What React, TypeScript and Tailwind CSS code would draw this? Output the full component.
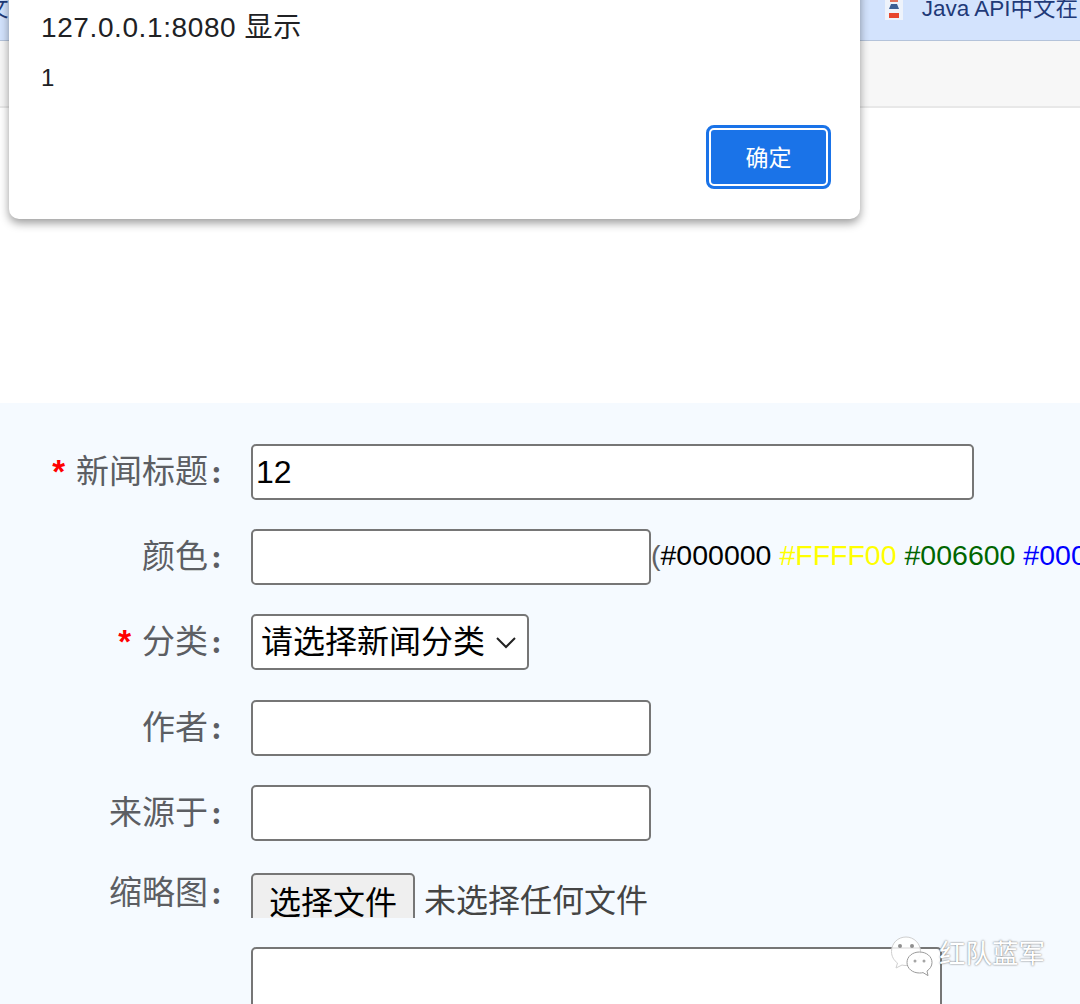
const inputClass =
  "h-[56px] rounded-[5px] border-2 border-[#767676] bg-white px-[3px] text-[32px] text-black outline-none";

function Label({ text, required, className = "" }: { text: string; required?: boolean; className?: string }) {
  return (
    <span
      className={`w-[222px] shrink-0 text-right text-[33px] leading-[56px] font-['Liberation_Serif','Noto_Sans_CJK_SC',serif] text-[#5c5e63] ${className}`}
    >
      {required && <span className="mr-[11px] font-['Liberation_Sans'] font-bold text-[#ff0000]">*</span>}
      {text}
      <b className="ml-[3px]">:</b>
    </span>
  );
}

function WeChatMark() {
  return (
    <svg width="46" height="44" viewBox="0 0 46 44" fill="none" className="shrink-0">
      <path
        d="M16 2C8 2 1.500 8 1.500 16.500c0 5 2.500 9 6 11.500L6 33l6-3c1.500.4 2.500.5 4 .5 8 0 14.500-6 14.500-14S24 2 16 2Z"
        fill="#ffffff"
        fillOpacity="0.85"
        stroke="#cfcfcf"
      />
      <circle cx="10" cy="11" r="2" fill="#8f8f8f" />
      <circle cx="22" cy="11" r="2" fill="#8f8f8f" />
      <path
        d="M29.500 17C22.500 17 17 21.500 17 27.500S22.500 38 29.500 38c1.500 0 2.500-.1 3.500-.4l5 3-1-4.600c3-2 5-5 5-8.500C42 21.500 36.500 17 29.500 17Z"
        fill="#ffffff"
        fillOpacity="0.9"
        stroke="#9a9a9a"
      />
      <circle cx="25" cy="26" r="1.500" fill="#a5a5a5" />
      <circle cx="34" cy="26" r="1.500" fill="#a5a5a5" />
    </svg>
  );
}

export default function App() {
  return (
    <div className="relative h-[1004px] w-[1080px] overflow-hidden bg-white font-['Liberation_Sans','Noto_Sans_CJK_SC',sans-serif]">
      <div className="flex h-[41px] items-start justify-between overflow-hidden border-b border-[#b4c3da] bg-[#d3e3fd] text-[22.5px] leading-[20px] text-[#1f3a78]">
        <span className="ml-[-14px] mt-[-1px]">文</span>
        <div className="mr-[2px] flex items-start gap-[17px] whitespace-nowrap">
          <svg width="22" height="22" viewBox="0 0 22 22" className="mt-[-1px]">
            <rect x="2" y="0" width="18" height="21" fill="#eef3fb" />
            <rect x="7" y="0" width="8" height="3" fill="#e2725b" />
            <path d="M8 5h6l2 5H6Z" fill="#3d5f94" />
            <rect x="6" y="14" width="10" height="5" fill="#e8462c" />
          </svg>
          <span className="mt-[-1px]">Java API中文在</span>
        </div>
      </div>
      <div className="h-[67px] border-b-2 border-[#e8e8e8] bg-[#f7f7f7]" />
      <div className="h-[295px]" />

      <form className="flex h-[601px] flex-col bg-[#f5faff] pl-0 pt-[41px]">
        <div className="flex items-start gap-[29px]">
          <Label text="新闻标题" required />
          <input defaultValue="12" className={`${inputClass} w-[723px]`} />
        </div>
        <div className="mt-[29px] flex items-start gap-[29px] whitespace-nowrap">
          <Label text="颜色" />
          <div className="flex items-center">
            <input className={`${inputClass} w-[400px]`} />
            <span className="mb-[4px] text-[28.5px] text-[#606266]">
              (<span className="text-black">#000000</span>{" "}
              <span className="text-[#ffff00]">#FFFF00</span>{" "}
              <span className="text-[#006600]">#006600</span>{" "}
              <span className="text-[#0000ff]">#0000FF</span>
            </span>
          </div>
        </div>
        <div className="mt-[29px] flex items-start gap-[29px]">
          <Label text="分类" required />
          <div className="flex h-[56px] w-[278px] items-center justify-between rounded-[5px] border-2 border-[#767676] bg-white pl-[8px] pr-[10px] text-[32px] text-black">
            <span>请选择新闻分类</span>
            <svg width="22" height="14" viewBox="0 0 22 14" fill="none">
              <path d="M2 3l9 9 9-9" stroke="#222222" strokeWidth="2" />
            </svg>
          </div>
        </div>
        <div className="mt-[30px] flex items-start gap-[29px]">
          <Label text="作者" />
          <input className={`${inputClass} w-[400px]`} />
        </div>
        <div className="mt-[29px] flex items-start gap-[29px]">
          <Label text="来源于" />
          <input className={`${inputClass} w-[400px]`} />
        </div>
        <div className="mt-[32px] flex items-start gap-[29px]">
          <Label text="缩略图" className="mt-[-8px]" />
          <div className="flex h-[45px] items-start overflow-hidden whitespace-nowrap text-[32px] text-[#444444]">
            <div className="h-[56px] w-[164px] rounded-[5px] border-2 border-[#767676] bg-[#efefef] text-center leading-[56px] text-black">
              选择文件
            </div>
            <span className="ml-[9px] leading-[56px]">未选择任何文件</span>
          </div>
        </div>
        <div className="mt-[26px] pl-[251px]">
          <div className="h-[120px] w-[691px] rounded-[5px] border-2 border-[#767676] bg-white" />
        </div>
      </form>

      <div className="absolute left-[9px] top-[-20px] flex h-[239px] w-[851px] flex-col rounded-b-[10px] bg-white pl-[32px] pr-[29px] pt-[28px] text-[#202124] shadow-[0_4px_10px_rgba(0,0,0,0.4)]">
        <div className="text-[28px] leading-[40px] tracking-[0.6px]">127.0.0.1:8080 显示</div>
        <div className="mt-[14px] text-[24px] leading-[32px]">1</div>
        <div className="mt-[31px] flex justify-end">
          <button
            type="button"
            className="h-[64px] w-[125px] rounded-[8px] border-[3px] border-[#1a73e8] bg-[#1a73e8] pt-[3px] text-[23px] text-white outline-2 outline-offset-[-5px] outline-white"
          >
            确定
          </button>
        </div>
      </div>

      <div className="absolute left-[890px] top-[935px] flex items-center">
        <WeChatMark />
        <span className="ml-[3px] mt-[-4px] text-[26.5px] text-white [text-shadow:0_0_2px_#555555]">红队蓝军</span>
      </div>
    </div>
  );
}
